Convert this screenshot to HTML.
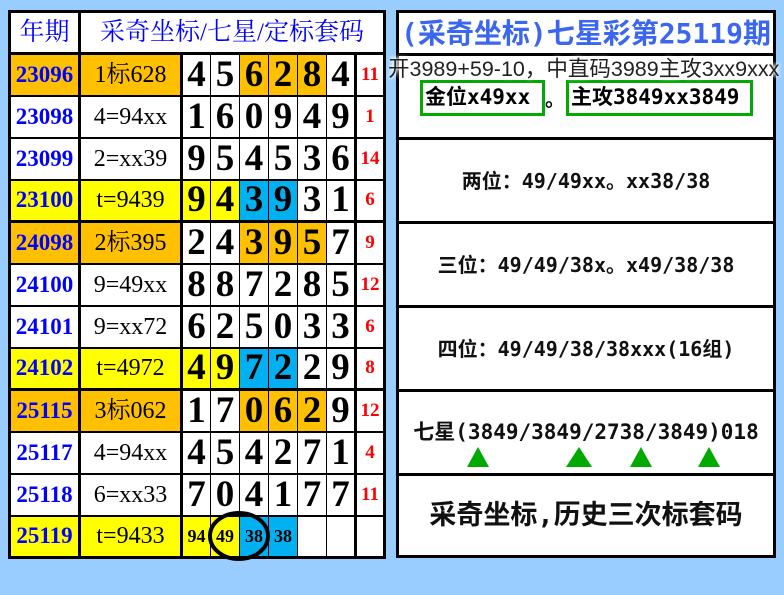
<!DOCTYPE html>
<html><head><meta charset="utf-8"><style>
*{margin:0;padding:0;box-sizing:border-box}
body{width:784px;height:595px;background:#99CCFF;position:relative;overflow:hidden;font-family:"Liberation Serif","Noto Serif CJK SC",serif}
table{position:absolute;left:8px;top:10px;border-collapse:collapse;border:3px solid #000;background:#fff;table-layout:fixed}
tr{height:42px}
td{border:1px solid #000;text-align:center;vertical-align:middle;height:42px;line-height:34px;padding:0;overflow:hidden;white-space:nowrap}
.h td{color:#0000FF;font-size:25px;font-family:"Liberation Serif","Noto Serif CJK SC",serif;border-bottom:3px solid #000}
.y{color:#0000FF;font-weight:bold;font-size:23px;border-right:3px solid #000;border-bottom:2px solid #000}
.l{font-size:24px;border-right:3px solid #000;border-bottom:2px solid #000}
.d{font-weight:bold;font-size:37px;border-bottom:2px solid #000}
.r{color:#FF0000;font-weight:bold;font-size:19px;border-left:3px solid #000;border-bottom:2px solid #000}
.g td{border-bottom:3px solid #000}
.o{background:#FFC000}.ye{background:#FFFF00}.b{background:#00B0F0}
td.s{font-size:18px}
#rp{position:absolute;left:396px;top:10px;width:380px;height:548px;background:#fff;border:3px solid #000}
.m{font-family:"DejaVu Sans Mono","Noto Sans CJK SC",sans-serif;font-weight:bold}
.sec{position:absolute;left:0;width:374px;border-top:3px solid #000;text-align:center;font-family:"DejaVu Sans Mono","Noto Sans CJK SC",sans-serif;font-weight:bold;color:#111;white-space:nowrap}
.gb{position:absolute;border:3px solid #00AA00;font-family:"DejaVu Sans Mono","Noto Sans CJK SC",sans-serif;font-weight:bold;font-size:21px;line-height:29px;padding-left:2px;white-space:nowrap}
.tri{position:absolute;width:0;height:0;border-left:11px solid transparent;border-right:11px solid transparent;border-bottom:20px solid #00AA00}
</style></head><body>
<table>
<colgroup><col style="width:70px"><col style="width:102px"><col style="width:29px"><col style="width:29px"><col style="width:29px"><col style="width:29px"><col style="width:29px"><col style="width:29px"><col style="width:29px"></colgroup>
<tr class="h"><td style="border-right:3px solid #000">年期</td><td colspan="8">采奇坐标/七星/定标套码</td></tr>
<tr><td class="y o">23096</td><td class="l o">1标628</td><td class="d">4</td><td class="d">5</td><td class="d o">6</td><td class="d o">2</td><td class="d o">8</td><td class="d">4</td><td class="r">11</td></tr>
<tr><td class="y">23098</td><td class="l">4=94xx</td><td class="d">1</td><td class="d">6</td><td class="d">0</td><td class="d">9</td><td class="d">4</td><td class="d">9</td><td class="r">1</td></tr>
<tr><td class="y">23099</td><td class="l">2=xx39</td><td class="d">9</td><td class="d">5</td><td class="d">4</td><td class="d">5</td><td class="d">3</td><td class="d">6</td><td class="r">14</td></tr>
<tr class="g"><td class="y ye">23100</td><td class="l ye">t=9439</td><td class="d ye">9</td><td class="d ye">4</td><td class="d b">3</td><td class="d b">9</td><td class="d">3</td><td class="d">1</td><td class="r">6</td></tr>
<tr><td class="y o">24098</td><td class="l o">2标395</td><td class="d">2</td><td class="d">4</td><td class="d o">3</td><td class="d o">9</td><td class="d o">5</td><td class="d">7</td><td class="r">9</td></tr>
<tr><td class="y">24100</td><td class="l">9=49xx</td><td class="d">8</td><td class="d">8</td><td class="d">7</td><td class="d">2</td><td class="d">8</td><td class="d">5</td><td class="r">12</td></tr>
<tr><td class="y">24101</td><td class="l">9=xx72</td><td class="d">6</td><td class="d">2</td><td class="d">5</td><td class="d">0</td><td class="d">3</td><td class="d">3</td><td class="r">6</td></tr>
<tr class="g"><td class="y ye">24102</td><td class="l ye">t=4972</td><td class="d ye">4</td><td class="d ye">9</td><td class="d b">7</td><td class="d b">2</td><td class="d">2</td><td class="d">9</td><td class="r">8</td></tr>
<tr><td class="y o">25115</td><td class="l o">3标062</td><td class="d">1</td><td class="d">7</td><td class="d o">0</td><td class="d o">6</td><td class="d o">2</td><td class="d">9</td><td class="r">12</td></tr>
<tr><td class="y">25117</td><td class="l">4=94xx</td><td class="d">4</td><td class="d">5</td><td class="d">4</td><td class="d">2</td><td class="d">7</td><td class="d">1</td><td class="r">4</td></tr>
<tr><td class="y">25118</td><td class="l">6=xx33</td><td class="d">7</td><td class="d">0</td><td class="d">4</td><td class="d">1</td><td class="d">7</td><td class="d">7</td><td class="r">11</td></tr>
<tr><td class="y ye">25119</td><td class="l ye">t=9433</td><td class="d ye s">94</td><td class="d ye s">49</td><td class="d b s">38</td><td class="d b s">38</td><td class="d"></td><td class="d"></td><td class="r"></td></tr>
</table>
<svg style="position:absolute;left:0;top:0" width="784" height="595"><ellipse cx="239" cy="536" rx="29" ry="23" fill="none" stroke="#000" stroke-width="4"/></svg>
<div id="rp">
<div class="m" style="position:absolute;left:0;top:0;width:374px;height:40px;text-align:center;line-height:42px;color:#3A66F0;font-size:28px;white-space:nowrap">(采奇坐标)七星彩第25119期</div>
<div class="sec" style="top:40px;height:85px"></div>
<div class="sec" style="top:124px;height:85px;font-size:20px;line-height:82px">两位：49/49xx。xx38/38</div>
<div class="sec" style="top:208px;height:85px;font-size:20px;line-height:82px">三位：49/49/38x。x49/38/38</div>
<div class="sec" style="top:292px;height:85px;font-size:20px;line-height:82px">四位：49/49/38/38xxx(16组)</div>
<div class="sec" style="top:376px;height:85px;font-size:21px;line-height:80px">七星(3849/3849/2738/3849)018</div>
<div class="sec" style="top:460px;height:85px;font-size:27px;line-height:80px">采奇坐标,历史三次标套码</div>
<div class="gb" style="left:21px;top:67px;width:125px;height:36px">金位x49xx</div>
<div style="position:absolute;left:146px;top:70px;font-size:20px;font-weight:bold;font-family:'Noto Sans CJK SC',sans-serif">。</div>
<div class="gb" style="left:167px;top:67px;width:187px;height:36px">主攻3849xx3849</div>
<div class="tri" style="left:68px;top:434px"></div>
<div class="tri" style="left:167px;top:434px;border-left-width:13px;border-right-width:13px"></div>
<div class="tri" style="left:231px;top:434px"></div>
<div class="tri" style="left:299px;top:434px"></div>
</div>
<div style="position:absolute;left:388px;top:52px;width:396px;font-family:'Liberation Sans','Noto Sans CJK SC',sans-serif;font-size:21.5px;color:#222;white-space:nowrap;text-shadow:0 0 3px #fff,0 0 5px #fff,0 0 6px #fff">开3989+59-10，中直码3989主攻3xx9xxx</div>
</body></html>
